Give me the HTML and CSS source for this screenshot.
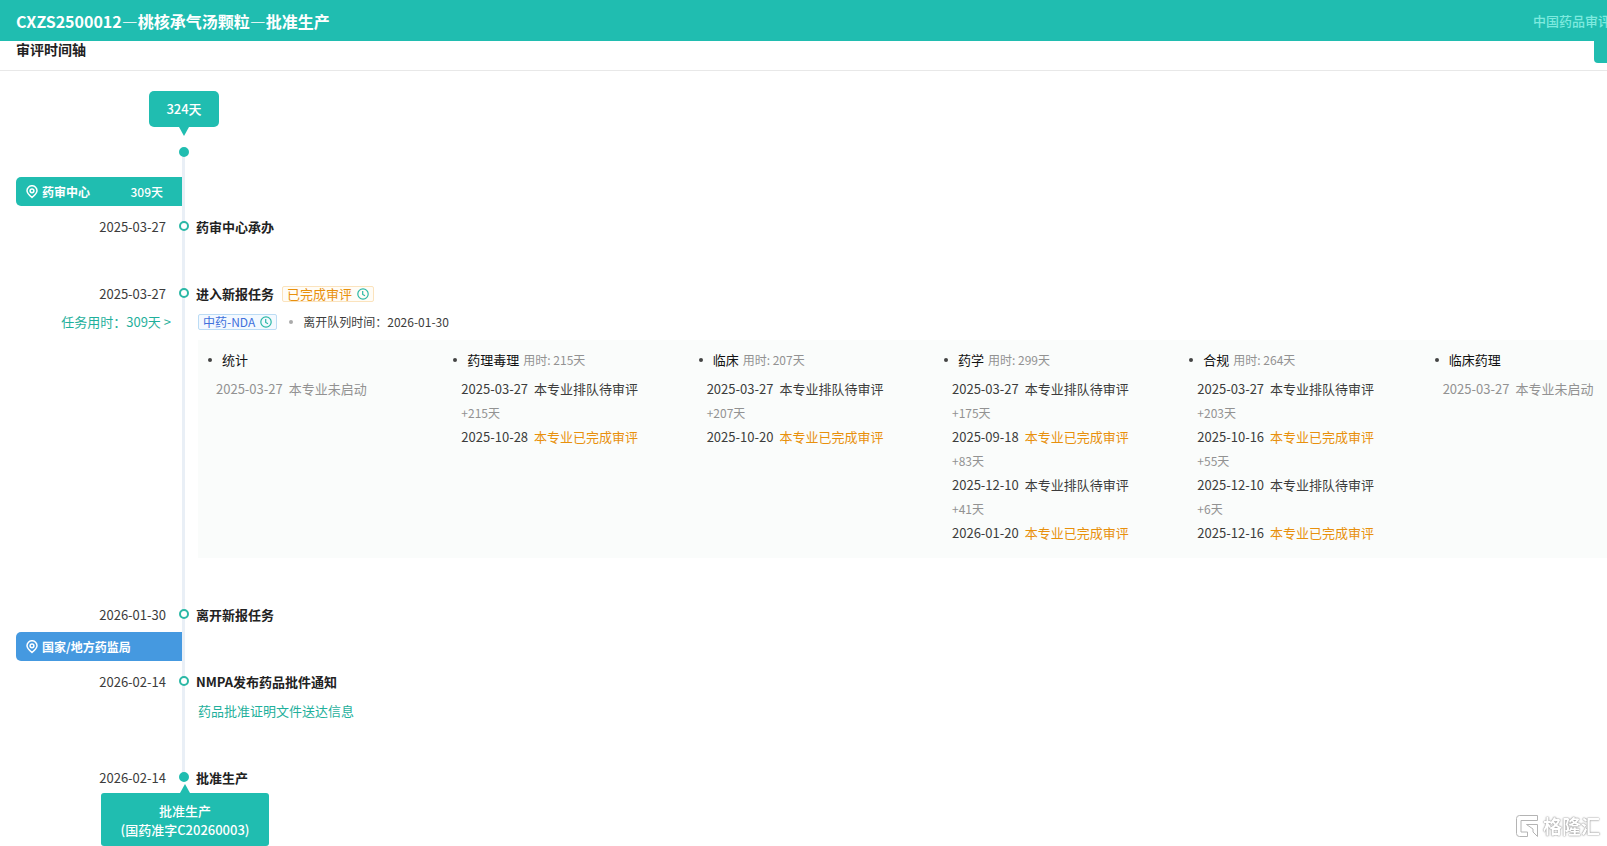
FILE: index.html
```html
<!DOCTYPE html>
<html lang="zh-CN">
<head>
<meta charset="utf-8">
<title>CXZS2500012—桃核承气汤颗粒—批准生产</title>
<link rel="stylesheet" href="styles.css">
</head>
<body>
<svg class="defs" aria-hidden="true">
  <symbol id="pin" viewBox="0 0 12 14">
    <path d="M6 12.500C3.200 10.200 1 8.300 1 5.700a5 5 0 0 1 10 0C11 8.300 8.800 10.200 6 12.500z" fill="none" stroke="currentColor" stroke-width="1.500"/>
    <circle cx="6" cy="5.800" r="1.900" fill="none" stroke="currentColor" stroke-width="1.500"/>
  </symbol>
  <symbol id="clock" viewBox="0 0 12 12">
    <circle cx="6" cy="6" r="5.200" fill="none" stroke="currentColor" stroke-width="1.200"/>
    <path d="M5.700 3v3.400L8 7.800" fill="none" stroke="currentColor" stroke-width="1.200"/>
  </symbol>
</svg>

<header class="topbar">
  <h1 class="topbar-title">CXZS2500012—桃核承气汤颗粒—批准生产</h1>
  <a class="topbar-link" href="#">中国药品审评</a>
</header>

<main>
  <div class="section-head">
    <h2 class="section-title">审评时间轴</h2>
    <button class="section-action" type="button" aria-label="展开"></button>
  </div>

  <div class="total">324天</div>

  <div class="timeline">
    <span class="node node-solid node-start"></span>

    <div class="stage">
      <svg class="pin"><use href="#pin"/></svg>
      <span>药审中心</span>
      <span class="stage-days">309天</span>
    </div>

    <section class="event">
      <div class="when"><time>2025-03-27</time></div>
      <span class="node"></span>
      <div class="what"><h3 class="event-title">药审中心承办</h3></div>
    </section>

    <section class="event event-task">
      <div class="when">
        <time>2025-03-27</time>
        <a class="task-time" href="#">任务用时：309天 &gt;</a>
      </div>
      <span class="node"></span>
      <div class="what">
        <h3 class="event-title">进入新报任务
          <span class="tag tag-done">已完成审评<svg class="clock"><use href="#clock"/></svg></span>
        </h3>
        <div class="queue">
          <span class="tag tag-type">中药-NDA<svg class="clock"><use href="#clock"/></svg></span>
          <span class="queue-time">离开队列时间：2026-01-30</span>
        </div>
        <div class="panel">
          <div class="major">
            <h4 class="major-title">统计</h4>
            <p class="step muted"><time>2025-03-27</time><span>本专业未启动</span></p>
          </div>
          <div class="major">
            <h4 class="major-title">药理毒理<small class="spent">用时: 215天</small></h4>
            <p class="step"><time>2025-03-27</time><span>本专业排队待审评</span></p>
            <p class="delta">+215天</p>
            <p class="step"><time>2025-10-28</time><span class="done">本专业已完成审评</span></p>
          </div>
          <div class="major">
            <h4 class="major-title">临床<small class="spent">用时: 207天</small></h4>
            <p class="step"><time>2025-03-27</time><span>本专业排队待审评</span></p>
            <p class="delta">+207天</p>
            <p class="step"><time>2025-10-20</time><span class="done">本专业已完成审评</span></p>
          </div>
          <div class="major">
            <h4 class="major-title">药学<small class="spent">用时: 299天</small></h4>
            <p class="step"><time>2025-03-27</time><span>本专业排队待审评</span></p>
            <p class="delta">+175天</p>
            <p class="step"><time>2025-09-18</time><span class="done">本专业已完成审评</span></p>
            <p class="delta">+83天</p>
            <p class="step"><time>2025-12-10</time><span>本专业排队待审评</span></p>
            <p class="delta">+41天</p>
            <p class="step"><time>2026-01-20</time><span class="done">本专业已完成审评</span></p>
          </div>
          <div class="major">
            <h4 class="major-title">合规<small class="spent">用时: 264天</small></h4>
            <p class="step"><time>2025-03-27</time><span>本专业排队待审评</span></p>
            <p class="delta">+203天</p>
            <p class="step"><time>2025-10-16</time><span class="done">本专业已完成审评</span></p>
            <p class="delta">+55天</p>
            <p class="step"><time>2025-12-10</time><span>本专业排队待审评</span></p>
            <p class="delta">+6天</p>
            <p class="step"><time>2025-12-16</time><span class="done">本专业已完成审评</span></p>
          </div>
          <div class="major">
            <h4 class="major-title">临床药理</h4>
            <p class="step muted"><time>2025-03-27</time><span>本专业未启动</span></p>
          </div>
        </div>
      </div>
    </section>

    <section class="event event-tight">
      <div class="when"><time>2026-01-30</time></div>
      <span class="node"></span>
      <div class="what"><h3 class="event-title">离开新报任务</h3></div>
    </section>

    <div class="stage stage-blue">
      <svg class="pin"><use href="#pin"/></svg>
      <span>国家/地方药监局</span>
    </div>

    <section class="event event-notice">
      <div class="when"><time>2026-02-14</time></div>
      <span class="node"></span>
      <div class="what">
        <h3 class="event-title">NMPA发布药品批件通知</h3>
        <a class="notice-link" href="#">药品批准证明文件送达信息</a>
      </div>
    </section>

    <section class="event event-last">
      <div class="when"><time>2026-02-14</time></div>
      <span class="node node-solid"></span>
      <div class="what"><h3 class="event-title">批准生产</h3></div>
    </section>
  </div>
  <div class="result">批准生产<br>(国药准字C20260003)</div>
</main>

<div class="watermark">
  <svg class="watermark-logo" viewBox="0 0 24 24">
    <path d="M22.500 6.500V1.500H4.500a3 3 0 0 0-3 3v15a3 3 0 0 0 3 3h8v-4.500H6V6.500zM11.500 10.500h11v12l-4.500-4.500v-3z" fill="#fff" stroke="#b4b4b4" stroke-width="1" stroke-linejoin="round"/>
  </svg>
  <span>格隆汇</span>
</div>
</body>
</html>
```

FILE: styles.css
```css
* {
  box-sizing: border-box;
}

body {
  margin: 0;
  overflow: hidden;
  background: #fff;
  color: #3c3c3c;
  font: 13px/20px "Noto Sans CJK SC", sans-serif;
}

h1, h2, h3, h4, p {
  margin: 0;
  font-size: inherit;
}

a {
  color: #1fb09c;
  text-decoration: none;
}

.defs {
  display: none;
}

.topbar {
  display: flex;
  align-items: center;
  justify-content: space-between;
  height: 41px;
  padding-left: 16px;
  background: #20bdb0;
  white-space: nowrap;
}

.topbar-title {
  color: #fff;
  font-size: 16px;
}

.topbar-link {
  margin-right: -4px;
  color: #7eeadf;
  font-weight: 500;
}

.section-head {
  display: flex;
  justify-content: space-between;
  align-items: flex-start;
  height: 30px;
  padding-left: 16px;
  border-bottom: 1px solid #e8e8e8;
}

.section-title {
  color: #222;
  font-size: 14px;
  line-height: 16px;
}

.section-action {
  width: 13px;
  height: 22px;
  padding: 0;
  border: 0;
  border-radius: 0 0 0 4px;
  background: #20bdb0;
}

.total {
  position: relative;
  width: 70px;
  margin: 20px 0 20px 149px;
  border-radius: 5px;
  background: #20bdb0;
  color: #fff;
  font-weight: 500;
  line-height: 36px;
  text-align: center;
}

.total::after,
.result::before {
  content: "";
  position: absolute;
  left: 50%;
  margin-left: -5px;
  border: 5px solid transparent;
}

.total::after {
  top: 100%;
  border-width: 9px 5px 0;
  border-top-color: #20bdb0;
}

.timeline {
  background: linear-gradient(#e9eff6, #e9eff6) no-repeat 182px 5px / 3px calc(100% - 25px);
}

.node {
  display: block;
  width: 10px;
  height: 10px;
  border: 2px solid #2bb8a6;
  border-radius: 50%;
  background: #fff;
}

.event .node {
  justify-self: center;
  margin-top: 4px;
}

.node-solid {
  border-color: #20bdb0;
  background: #20bdb0;
}

.node-start {
  margin: 0 0 20px 179px;
}

.stage {
  display: flex;
  align-items: center;
  gap: 4px;
  width: 166px;
  height: 29px;
  margin: 0 0 11px 16px;
  padding: 0 19px 0 10px;
  border-radius: 5px 0 0 5px;
  background: #20bdb0;
  color: #fff;
  font-size: 12px;
  font-weight: 700;
}

.stage-blue {
  background: #4599e0;
}

.stage-days {
  margin-left: auto;
  font-weight: 500;
}

.pin {
  width: 12px;
  height: 14px;
}

.event {
  display: grid;
  grid-template-columns: 172px 24px 1fr;
  align-items: start;
  min-height: 67px;
}

.event-task {
  padding-bottom: 47px;
}

.event-tight {
  min-height: 27px;
}

.event-notice {
  min-height: 96px;
}

.event-last {
  min-height: 25px;
}

.when {
  display: grid;
  gap: 8px;
  justify-items: end;
}

.when time {
  padding-right: 6px;
}

.task-time {
  padding-right: 1px;
}

.what {
  min-width: 0;
}

.event-title {
  display: flex;
  align-items: center;
  gap: 8px;
  color: #222;
  font-weight: 700;
}

.tag {
  display: inline-flex;
  align-items: center;
  gap: 5px;
  height: 16px;
  padding: 0 4px;
  border: 1px solid;
  border-radius: 2px;
  font-weight: 400;
}

.tag-done {
  border-color: #fbe3bd;
  background: #fffcf6;
  color: #e8900c;
}

.tag-type {
  border-color: #bcdcf5;
  background: #f3f9ff;
  color: #4070dc;
}

.clock {
  width: 12px;
  height: 12px;
  color: #2bb8a6;
}

.queue {
  display: flex;
  align-items: center;
  height: 20px;
  margin: 8px 0 8px 2px;
  font-size: 12px;
}

.queue-time {
  display: flex;
  align-items: center;
  gap: 10px;
  margin-left: 12px;
}

.queue-time::before {
  content: "";
  width: 4px;
  height: 4px;
  border-radius: 50%;
  background: #aaa;
}

.panel {
  display: grid;
  grid-template-columns: repeat(6, 1fr);
  min-width: 1472px;
  margin-left: 2px;
  padding: 10px 0 13px;
  background: #fafcfb;
}

.major {
  padding-left: 18px;
}

.major-title {
  display: flex;
  align-items: center;
  margin: 0 0 7px -8px;
  color: #111;
  font-weight: 400;
}

.major-title::before {
  content: "";
  width: 4px;
  height: 4px;
  margin-right: 10px;
  border-radius: 50%;
  background: #444;
}

.spent {
  margin-left: 4px;
  color: #929292;
  font-size: 12px;
}

.step {
  display: flex;
  gap: 6px;
  line-height: 24px;
}

.muted {
  color: #929292;
}

.delta {
  color: #929292;
  font-size: 12px;
  line-height: 24px;
}

.done {
  color: #e8900c;
}

.notice-link {
  display: block;
  margin: 9px 0 0 2px;
}

.result {
  position: relative;
  width: 168px;
  margin-left: 101px;
  padding: 8px 0 7px;
  border-radius: 3px;
  background: #20bdb0;
  color: #fff;
  font-weight: 500;
  line-height: 19px;
  text-align: center;
}

.result::before {
  bottom: 100%;
  border-width: 0 5px 9px;
  border-bottom-color: #20bdb0;
}

.watermark {
  position: fixed;
  right: 7px;
  bottom: 6px;
  display: flex;
  align-items: center;
  gap: 4px;
  color: #fff;
  font-size: 19px;
  font-weight: 700;
  line-height: 28px;
  text-shadow: 0 0 1px #777, 0 0 2px #999;
}

.watermark-logo {
  width: 24px;
  height: 24px;
}
```
